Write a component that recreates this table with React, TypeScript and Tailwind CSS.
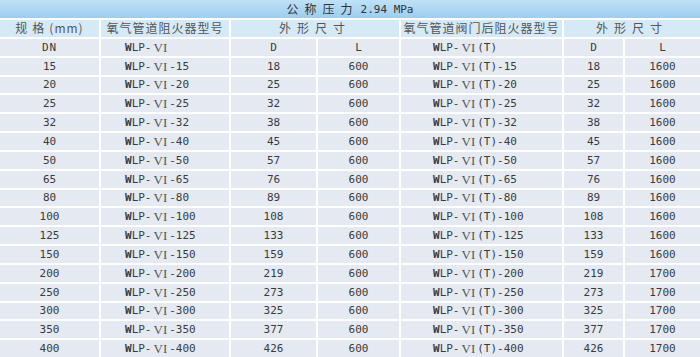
const dn = ['15', '20', '25', '32', '40', '50', '65', '80', '100', '125', '150', '200', '250', '300', '350', '400'];
const dd = ['18', '25', '32', '38', '45', '57', '76', '89', '108', '133', '159', '219', '273', '325', '377', '426'];

const cn = "font-['Noto_Sans_CJK_SC',sans-serif]";
const mono = "font-['DejaVu_Sans_Mono',monospace]";

function Model({ t, suffix }: { t?: boolean; suffix?: string }) {
  return (
    <span className={`${mono} text-[11px] leading-none text-[#3a3a3a] whitespace-pre flex items-center`}>
      <span className="font-bold">W</span>
      <span>LP-</span>
      <span className="font-['Liberation_Serif',serif] text-[13px] text-[#555] ml-[2px] mr-[2px]">VI</span>
      {t && <span>(T)</span>}
      {suffix && <span>-{suffix}</span>}
    </span>
  );
}

function Cell({ children, className = '' }: { children: React.ReactNode; className?: string }) {
  return <div className={`bg-[#e5eaf2] flex items-center leading-none min-h-0 overflow-hidden ${className}`}>{children}</div>;
}

const num = `justify-center ${mono} text-[11px] text-[#3a3a3a]`;
const head = `bg-[#d5e9f7] flex items-center justify-center leading-none min-h-0 overflow-hidden ${cn} text-[12px] text-[#555]`;

export default function App() {
  return (
    <div className="w-[700px] h-[357px] bg-white overflow-hidden">
      <div className="grid h-full grid-cols-[99px_128px_85px_81px_161px_59px_75px] grid-rows-[18px_repeat(18,minmax(0,1fr))] gap-x-[2px] gap-y-[2px]">
        {/* title */}
        <div className="col-span-7 bg-gradient-to-b from-[#bfe1f6] to-[#9dcdef] flex items-center justify-center leading-none">
          <span className={`${cn} text-[12px] text-[#333] tracking-[6px]`}>公称压力</span>
          <span className={`${mono} text-[11px] text-[#333] ml-[2px] whitespace-pre`}>2.94 MPa</span>
        </div>

        {/* header */}
        <div className={head}>
          <span className="tracking-[5px]">规格</span>
          <span className="tracking-[1px]">(mm)</span>
        </div>
        <div className={`${head} tracking-[1px]`}>氧气管道阻火器型号</div>
        <div className={`${head} col-span-2 tracking-[6px]`}>外形尺寸</div>
        <div className={`${head} tracking-[1px]`}>氧气管道阀门后阻火器型号</div>
        <div className={`${head} col-span-2 tracking-[6px]`}>外形尺寸</div>

        {/* DN row */}
        <Cell className={`${num} tracking-[1px]`}>DN</Cell>
        <Cell className="pl-[24px]"><Model /></Cell>
        <Cell className={num}>D</Cell>
        <Cell className={num}>L</Cell>
        <Cell className="pl-[32px]"><Model t /></Cell>
        <Cell className={num}>D</Cell>
        <Cell className={num}>L</Cell>

        {dn.map((n, i) => (
          <div key={n} className="contents">
            <Cell className={num}>{n}</Cell>
            <Cell className="pl-[24px]"><Model suffix={n} /></Cell>
            <Cell className={num}>{dd[i]}</Cell>
            <Cell className={num}>600</Cell>
            <Cell className="pl-[32px]"><Model t suffix={n} /></Cell>
            <Cell className={num}>{dd[i]}</Cell>
            <Cell className={num}>{i < 11 ? '1600' : '1700'}</Cell>
          </div>
        ))}
      </div>
    </div>
  );
}
